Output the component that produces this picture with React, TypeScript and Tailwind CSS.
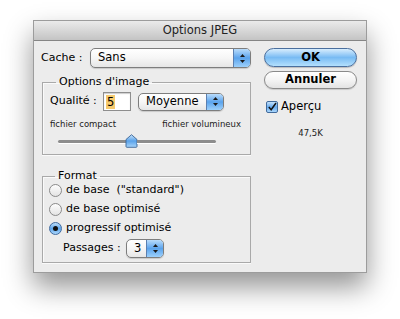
import React from 'react';

const Stepper: React.FC = () => (
  <div className="h-full w-[17px] flex items-center justify-center rounded-r-[4px] border-l border-[#5b7fb0] bg-gradient-to-b from-[#b9dcfb] via-[#5aa3ec] to-[#9cd0fb]">
    <svg width="7" height="11" viewBox="0 0 7 11">
      <path d="M3.5 1 L6 4 L1 4 Z" fill="#1a1a1a" />
      <path d="M3.5 10 L6 7 L1 7 Z" fill="#1a1a1a" />
    </svg>
  </div>
);

const Popup: React.FC<{ label: string; className: string }> = ({ label, className }) => (
  <div
    className={`flex items-stretch rounded-[5px] border border-[#7d7d7d] bg-gradient-to-b from-white via-[#f6f6f6] to-[#e6e6e6] shadow-[0_1px_1px_rgba(0,0,0,0.15)] ${className}`}
  >
    <span className="flex-1 flex items-center pl-[7px] text-[11.5px]">{label}</span>
    <Stepper />
  </div>
);

const Radio: React.FC<{ checked?: boolean; label: string }> = ({ checked, label }) => (
  <div className="h-[18px] flex items-center gap-[4px]">
    <span
      className={`w-[13px] h-[13px] rounded-full flex items-center justify-center border ${
        checked
          ? 'border-[#3f6a9f] bg-gradient-to-b from-[#bfe0fb] via-[#5ea6ec] to-[#a9d6fb]'
          : 'border-[#8a8a8a] bg-gradient-to-b from-[#fdfdfd] to-[#e4e4e4]'
      }`}
    >
      {checked && <span className="w-[5px] h-[5px] rounded-full bg-[#111]" />}
    </span>
    <span className="text-[11px] whitespace-pre">{label}</span>
  </div>
);

export default function App() {
  return (
    <div className="w-[400px] h-[319px] overflow-hidden bg-white pt-[20px] pl-[33px] font-['DejaVu_Sans',sans-serif] text-black">
      {/* the window */}
      <div className="w-[334px] h-[253px] flex flex-col bg-[#ececec] border border-[#9c9c9c] shadow-[0_14px_26px_rgba(0,0,0,0.42)]">
        {/* title bar */}
        <div className="h-[20px] shrink-0 flex items-center justify-center border-b border-[#858585] bg-gradient-to-b from-[#ebebeb] to-[#c4c4c4] text-[11.5px] text-[#222]">
          Options JPEG
        </div>

        <div className="flex pl-[7px] pt-[7px] gap-[13px]">
          {/* left column */}
          <div className="w-[210px] flex flex-col">
            <div className="h-[20px] flex items-center">
              <span className="w-[49px] text-[11px]">Cache :</span>
              <Popup label="Sans" className="w-[161px] h-[20px]" />
            </div>

            {/* options d'image */}
            <fieldset className="mt-[7px] ml-[1px] w-[209px] h-[80px] border border-[#a9a9a9] shadow-[inset_1px_1px_0_#fafafa,0_1px_0_#fafafa] px-[7px]">
              <legend className="ml-[6px] px-[3px] text-[11px] leading-[14px]">Options d'image</legend>
              <div className="mt-[3px] h-[19px] flex items-center">
                <span className="w-[53px] text-[11px] whitespace-nowrap">Qualité :</span>
                <div className="w-[28px] h-[19px] flex items-center border border-[#8e8e8e] bg-white pl-[2px] shadow-[inset_0_1px_1px_rgba(0,0,0,0.2)]">
                  <span className="bg-[#f6ca6d] px-[1px] text-[11.5px] leading-[14px]">5</span>
                </div>
                <Popup label="Moyenne" className="ml-[7px] w-[86px] h-[18px]" />
              </div>
              <div className="mt-[8px] flex justify-between pr-[2px] text-[8.5px] leading-[10px] text-[#222]">
                <span>fichier compact</span>
                <span>fichier volumineux</span>
              </div>
              {/* slider */}
              <div className="mt-[5px] ml-[8px] w-[158px] h-[14px] flex items-center">
                <div className="w-[68px] h-[3px] rounded-l-full bg-[#8d8d8d] shadow-[0_1px_0_#fff]" />
                <svg width="13" height="14" viewBox="0 0 13 14" className="shrink-0 -mx-[1px]">
                  <defs>
                    <linearGradient id="th" x1="0" y1="0" x2="0" y2="1">
                      <stop offset="0" stopColor="#c9e4fb" />
                      <stop offset="0.5" stopColor="#5aa2ea" />
                      <stop offset="1" stopColor="#a9d6fb" />
                    </linearGradient>
                  </defs>
                  <path d="M6.5 0.7 L12 5.5 L12 12.5 Q12 13.3 11 13.3 L2 13.3 Q1 13.3 1 12.5 L1 5.5 Z" fill="url(#th)" stroke="#3b6596" strokeWidth="0.9" />
                </svg>
                <div className="flex-1 h-[3px] rounded-r-full bg-[#8d8d8d] shadow-[0_1px_0_#fff]" />
              </div>
            </fieldset>

            {/* format */}
            <fieldset className="mt-[14px] ml-[1px] w-[209px] h-[94px] border border-[#a9a9a9] shadow-[inset_1px_1px_0_#fafafa,0_1px_0_#fafafa] pl-[6px]">
              <legend className="ml-[6px] px-[3px] text-[11px] leading-[14px]">Format</legend>
              <div className="flex flex-col gap-[1px] -mt-[2px]">
                <Radio label={'de base  ("standard")'} />
                <Radio label="de base optimisé" />
                <Radio checked label="progressif optimisé" />
              </div>
              <div className="mt-[2px] pl-[14px] h-[19px] flex items-center">
                <span className="w-[63px] text-[11px] whitespace-nowrap">Passages :</span>
                <Popup label="3" className="w-[38px] h-[19px]" />
              </div>
            </fieldset>
          </div>

          {/* right column */}
          <div className="w-[93px] flex flex-col">
            <button className="h-[19px] rounded-full border border-[#4a6f9e] bg-gradient-to-b from-[#d7edfd] via-[#78bbf3] to-[#b3e0fd] text-[11.5px] font-bold leading-none shadow-[0_1px_1px_rgba(0,0,0,0.2)]">
              OK
            </button>
            <button className="mt-[4px] h-[18px] rounded-full border border-[#8a8a8a] bg-gradient-to-b from-white via-[#f4f4f4] to-[#e3e3e3] text-[11.5px] font-bold leading-none shadow-[0_1px_1px_rgba(0,0,0,0.15)]">
              Annuler
            </button>
            <div className="mt-[11px] ml-[2px] h-[14px] flex items-center gap-[3px]">
              <span className="w-[12px] h-[12px] rounded-[2px] border border-[#416b9c] bg-gradient-to-b from-[#c5e2fb] via-[#66aaee] to-[#a9d6fb] flex items-center justify-center">
                <svg width="12" height="12" viewBox="0 0 12 12">
                  <path d="M2.2 6 L5 9.3 L10.8 1.2" fill="none" stroke="#111" strokeWidth="1.8" />
                </svg>
              </span>
              <span className="text-[11.5px]">Aperçu</span>
            </div>
            <div className="mt-[13px] text-center text-[8.5px] text-[#222]">47,5K</div>
          </div>
        </div>
      </div>
    </div>
  );
}
